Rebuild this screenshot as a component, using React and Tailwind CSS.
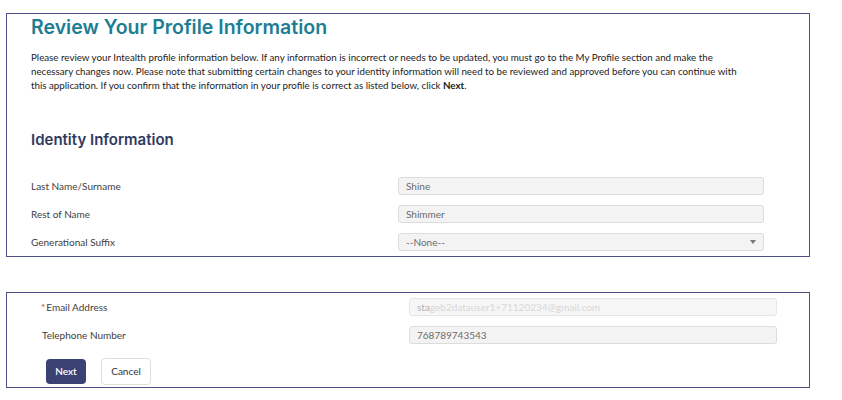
import React from 'react';

const body = { fontFamily: 'Lato, "Liberation Sans", sans-serif' };

function Field({ label, value, select }) {
  return (
    <div className="flex items-center h-[28px]">
      <div className="w-[367px] text-[10px] text-[#3e3e3e]">{label}</div>
      <div className="relative w-[366px] h-[18px] bg-[#f3f3f3] border border-[#dcdcdc] rounded-[3px] flex items-center px-[7px] text-[10px] text-[#6b6b6b]">
        {value}
        {select && (
          <span className="absolute right-[7px] top-[6px] w-0 h-0 border-l-[3px] border-r-[3px] border-t-[4px] border-l-transparent border-r-transparent border-t-[#777]" />
        )}
      </div>
    </div>
  );
}

export default function App() {
  return (
    <div className="w-[842px] h-[400px] bg-white overflow-hidden" style={body}>
      {/* Profile review panel */}
      <div className="ml-[6px] mt-[13px] w-[804px] h-[244px] border-[1.5px] border-[#4b4f85] pl-[24px]">
        <h1
          className="text-[19.5px] leading-[24px] font-semibold text-[#1e7d93] pt-[1px]"
          style={{ fontFamily: 'Inter, "Open Sans", sans-serif' }}
        >
          Review Your Profile Information
        </h1>
        <p className="mt-[11px] w-[722px] text-[9.75px] leading-[14px] text-[#1c1c1c]">
          Please review your Intealth profile information below. If any information is incorrect or needs to be updated, you must go to the My Profile section and make the necessary changes now. Please note that submitting certain changes to your identity information will need to be reviewed and approved before you can continue with this application. If you confirm that the information in your profile is correct as listed below, click <b>Next</b>.
        </p>
        <h2
          className="mt-[38px] text-[15px] leading-[20px] font-semibold text-[#2f3a5e]"
          style={{ fontFamily: 'Inter, "Open Sans", sans-serif' }}
        >
          Identity Information
        </h2>
        <div className="mt-[22px]">
          <Field label="Last Name/Surname" value="Shine" />
          <Field label="Rest of Name" value="Shimmer" />
          <Field label="Generational Suffix" value="--None--" select />
        </div>
      </div>

      {/* Contact panel */}
      <div className="ml-[6px] mt-[35px] w-[804px] h-[96px] border-[1.5px] border-[#4b4f85] pl-[34px] pt-[4px]">
        <div className="flex items-center h-[20px]">
          <div className="w-[368px] text-[10px] text-[#3e3e3e]">
            <span className="text-[#c23934] mr-[1px]">*</span>Email Address
          </div>
          <div className="w-[368px] h-[18px] bg-[#f6f6f6] border border-[#e6e6e6] rounded-[3px] flex items-center px-[7px] text-[10px] text-[#d6d6d6]">
            <span className="text-[#b0b0b0]">sta</span>geb2datauser1+71120234@gmail.com
          </div>
        </div>
        <div className="flex items-center h-[28px] mt-[4px]">
          <div className="w-[368px] text-[10px] text-[#3e3e3e] pl-[1px]">Telephone Number</div>
          <div className="w-[368px] h-[18px] bg-[#f3f3f3] border border-[#dcdcdc] rounded-[3px] flex items-center px-[7px] text-[10px] text-[#6b6b6b]">
            768789743543
          </div>
        </div>
        <div className="flex items-center gap-[15px] mt-[9px] pl-[5px]">
          <button className="w-[40px] h-[25px] bg-[#3b4273] text-white text-[10px] font-semibold rounded-[4px]">Next</button>
          <button className="w-[50px] h-[27px] bg-white border border-[#dedede] text-[#333] text-[10px] rounded-[4px]">Cancel</button>
        </div>
      </div>
    </div>
  );
}
